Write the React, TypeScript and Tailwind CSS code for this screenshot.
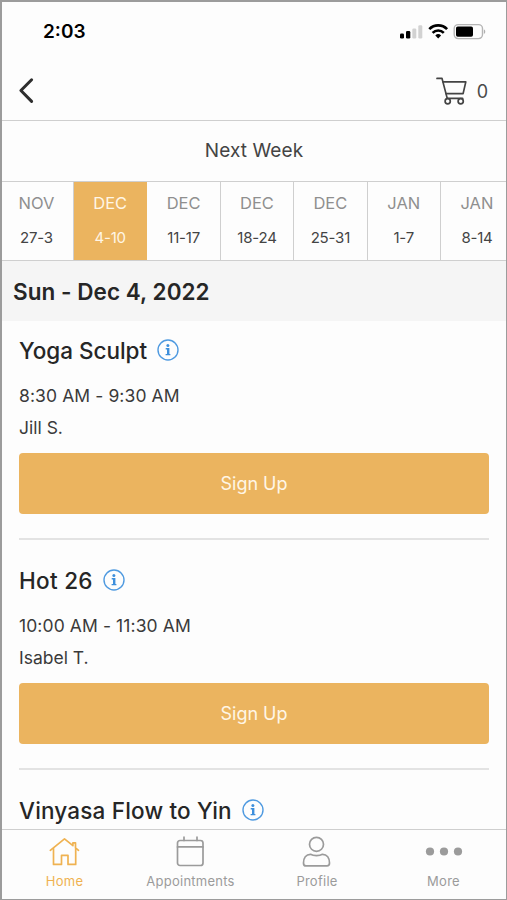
import type { ReactNode } from "react";

const WEEKS = [
  { month: "NOV", range: "27-3" },
  { month: "DEC", range: "4-10", active: true },
  { month: "DEC", range: "11-17" },
  { month: "DEC", range: "18-24" },
  { month: "DEC", range: "25-31" },
  { month: "JAN", range: "1-7" },
  { month: "JAN", range: "8-14" },
];

const CLASSES = [
  { name: "Yoga Sculpt", time: "8:30 AM - 9:30 AM", teacher: "Jill S.", tracking: "tracking-[-0.02px]" },
  { name: "Hot 26", time: "10:00 AM - 11:30 AM", teacher: "Isabel T.", tracking: "tracking-[0.3px]" },
];

function StatusBar() {
  return (
    <div className="flex h-[59px] shrink-0 items-center justify-between pl-[41px] pr-[19px]">
      <span className="text-[19px] font-semibold leading-6 text-black">2:03</span>
      <svg width="88" height="20" viewBox="0 0 88 20" fill="none">
        <rect x="1" y="11.5" width="4" height="5" rx="1.3" fill="#000" />
        <rect x="7" y="9" width="4.3" height="7.5" rx="1.3" fill="#000" />
        <rect x="13.3" y="6.5" width="4" height="10" rx="1.3" fill="#d2d2d2" />
        <rect x="19.3" y="3.3" width="4" height="13.2" rx="1.3" fill="#d2d2d2" />
        <g stroke="#000" strokeWidth="2.6">
          <path d="M30.3 7.2a12.3 12.3 0 0 1 17.8 0" />
          <path d="M33.6 10.9a7.900 7.900 0 0 1 11.200 0" />
        </g>
        <path d="M39.2 16.4l-2.900-3a4.200 4.200 0 0 1 5.800 0z" fill="#000" />
        <rect x="55.2" y="2.6" width="28.3" height="14" rx="4" stroke="#b5b5b5" strokeWidth="1.4" />
        <rect x="57" y="4.500" width="17" height="10.2" rx="1.8" fill="#000" />
        <path d="M84.9 7.500c1.800.5 1.800 3.900 0 4.400z" fill="#b0b0b0" />
      </svg>
    </div>
  );
}

function Header() {
  return (
    <div className="flex h-[60px] shrink-0 items-center justify-between border-b border-[#cfcfcf] pl-4 pr-[18px]">
      <svg width="20" height="28" viewBox="0 0 20 28" fill="none">
        <path d="M13.6 2.8L2.9 13.5l10.7 10.9" stroke="#2e2e2e" strokeWidth="3" strokeLinecap="round" strokeLinejoin="round" />
      </svg>
      <div className="flex items-center gap-2">
        <svg width="33" height="30" viewBox="0 0 33 30" fill="none" stroke="#444" strokeWidth="1.7" strokeLinejoin="round" strokeLinecap="round">
          <path d="M1 2.400h5l5.100 19.500" />
          <path d="M7.100 5.900h22.700l-2.700 11.700H10" />
          <path d="M11.100 22.400h15.500" />
          <circle cx="11.700" cy="25.300" r="2.600" fill="#fdfdfd" />
          <circle cx="24.700" cy="25.300" r="2.600" fill="#fdfdfd" />
        </svg>
        <span className="pt-[3px] text-[18px] leading-6 text-[#4a4a4a]">0</span>
      </div>
    </div>
  );
}

function WeekPicker() {
  return (
    <div className="grid shrink-0 grid-cols-[72px_repeat(5,73.4px)_1fr] border-y border-[#cfcfcf]">
      {WEEKS.map((w, i) => (
        <div
          key={i}
          className={`flex h-[78px] flex-col items-center whitespace-nowrap pt-[9px] ${
            w.active
              ? "border-r border-[#ebb55f] bg-[#ebb45f] text-[#fff6e6]"
              : i === WEEKS.length - 1
                ? "pl-[7px] text-[#444]"
                : i === 0
                  ? "border-r border-[#cfcfcf] pr-[2px] text-[#444]"
                  : "border-r border-[#cfcfcf] text-[#444]"
          }`}
        >
          <span className={`text-[16.5px] leading-6 ${w.active ? "" : "text-[#8f8f8f]"}`}>{w.month}</span>
          <span className="mt-[11px] text-[15px] leading-6 tracking-[-0.2px]">{w.range}</span>
        </div>
      ))}
    </div>
  );
}

function InfoIcon() {
  return (
    <svg width="22" height="22" viewBox="0 0 22 22" fill="none">
      <circle cx="11" cy="11" r="10" stroke="#4f9ae0" strokeWidth="1.4" />
      <circle cx="10.9" cy="6.5" r="1.5" fill="#3d8fdc" />
      <path d="M8.7 9.7h3v5.800M8.600 15.600h4.800" stroke="#3d8fdc" strokeWidth="1.4" />
      <path d="M11 9.200v6.600" stroke="#3d8fdc" strokeWidth="2" />
    </svg>
  );
}

function ClassTitle({ name, tracking }: { name: string; tracking: string }) {
  return (
    <div className="flex h-[30px] items-center gap-[10px]">
      <h2 className={`text-[22.5px] font-medium leading-[30px] text-[#262626] ${tracking}`}>{name}</h2>
      <div className="-mt-[3px]">
        <InfoIcon />
      </div>
    </div>
  );
}

function ClassItem({ name, time, teacher, tracking }: { name: string; time: string; teacher: string; tracking: string }) {
  return (
    <div className="mx-[17px] h-[230px] shrink-0 pt-[15px]">
      <ClassTitle name={name} tracking={tracking} />
      <p className="mt-[18px] text-[17.5px] leading-6 tracking-[0.1px] text-[#3a3a3a]">{time}</p>
      <p className="mt-2 text-[17.5px] leading-6 text-[#3a3a3a]">{teacher}</p>
      <button className="mt-[13px] block h-[61px] w-full rounded-[4px] bg-[#ebb45f] text-[18px] text-[#fff6e6]">
        Sign Up
      </button>
      <div className="mt-[24px] h-[2px] bg-[#e3e3e3]" />
    </div>
  );
}

function Tab({ label, active, children }: { label: string; active?: boolean; children: ReactNode }) {
  return (
    <div className={`flex flex-col items-center pt-[6px] ${active ? "text-[#efb251]" : "text-[#9b9b9b]"}`}>
      <svg width="38" height="34" viewBox="0 0 38 34" fill="none" stroke="currentColor" strokeWidth="1.7" strokeLinejoin="round" strokeLinecap="round">
        {children}
      </svg>
      <span className="mt-[2px] text-[13px] leading-[18px] tracking-[0.25px]">{label}</span>
    </div>
  );
}

function TabBar() {
  return (
    <nav className="grid h-[70px] shrink-0 grid-cols-[125px_127px_126px_127px] border-t border-[#cfcfcf]">
      <Tab label="Home" active>
        <path d="M4.300 14.300L18.500 2.900l8.400 6.800V6.800h2.600v5l3 2.500" />
        <path d="M7.500 12.500v15.900h8v-9H22v9h7.700V12.500" />
      </Tab>
      <Tab label="Appointments">
        <rect x="5.500" y="4.500" width="25.5" height="25" rx="2.5" />
        <path d="M5.500 10.900H31M12 1.200v3.300M25 1.200v3.300" />
      </Tab>
      <Tab label="Profile">
        <circle cx="18.500" cy="8.300" r="7" />
        <path d="M12.500 18.300c3 1.800 9 1.800 12 0 4.500 0 7 3.800 7 8.700 0 2.300-.7 2.900-2.500 2.900H8c-1.800 0-2.500-.6-2.500-2.900 0-4.900 2.500-8.700 7-8.700z" />
      </Tab>
      <Tab label="More">
        <g fill="currentColor" stroke="none">
          <circle cx="5" cy="15.5" r="4.1" />
          <circle cx="19" cy="15.5" r="4.1" />
          <circle cx="33" cy="15.5" r="4.1" />
        </g>
      </Tab>
    </nav>
  );
}

export default function App() {
  return (
    <div className="flex h-[900px] w-[507px] flex-col overflow-hidden border-y border-l-2 border-r border-t-2 border-[#9c9c9c] bg-[#fdfdfd] font-['Inter',sans-serif]">
      <StatusBar />
      <Header />
      <div className="flex h-[60px] shrink-0 items-center justify-center pt-px text-[19px] tracking-[0.1px] text-[#444]">
        Next Week
      </div>
      <WeekPicker />
      <h1 className="flex h-[60px] shrink-0 items-center bg-[#f5f5f5] pl-[11px] pt-[2px] text-[22.5px] font-semibold tracking-[0.05px] text-[#262626]">
        Sun - Dec 4, 2022
      </h1>
      <main className="flex min-h-0 flex-1 flex-col overflow-hidden">
        {CLASSES.map((c) => (
          <ClassItem key={c.name} {...c} />
        ))}
        <div className="mx-[17px] shrink-0 pt-[15px]">
          <ClassTitle name="Vinyasa Flow to Yin" tracking="tracking-[0.18px]" />
        </div>
      </main>
      <TabBar />
    </div>
  );
}
